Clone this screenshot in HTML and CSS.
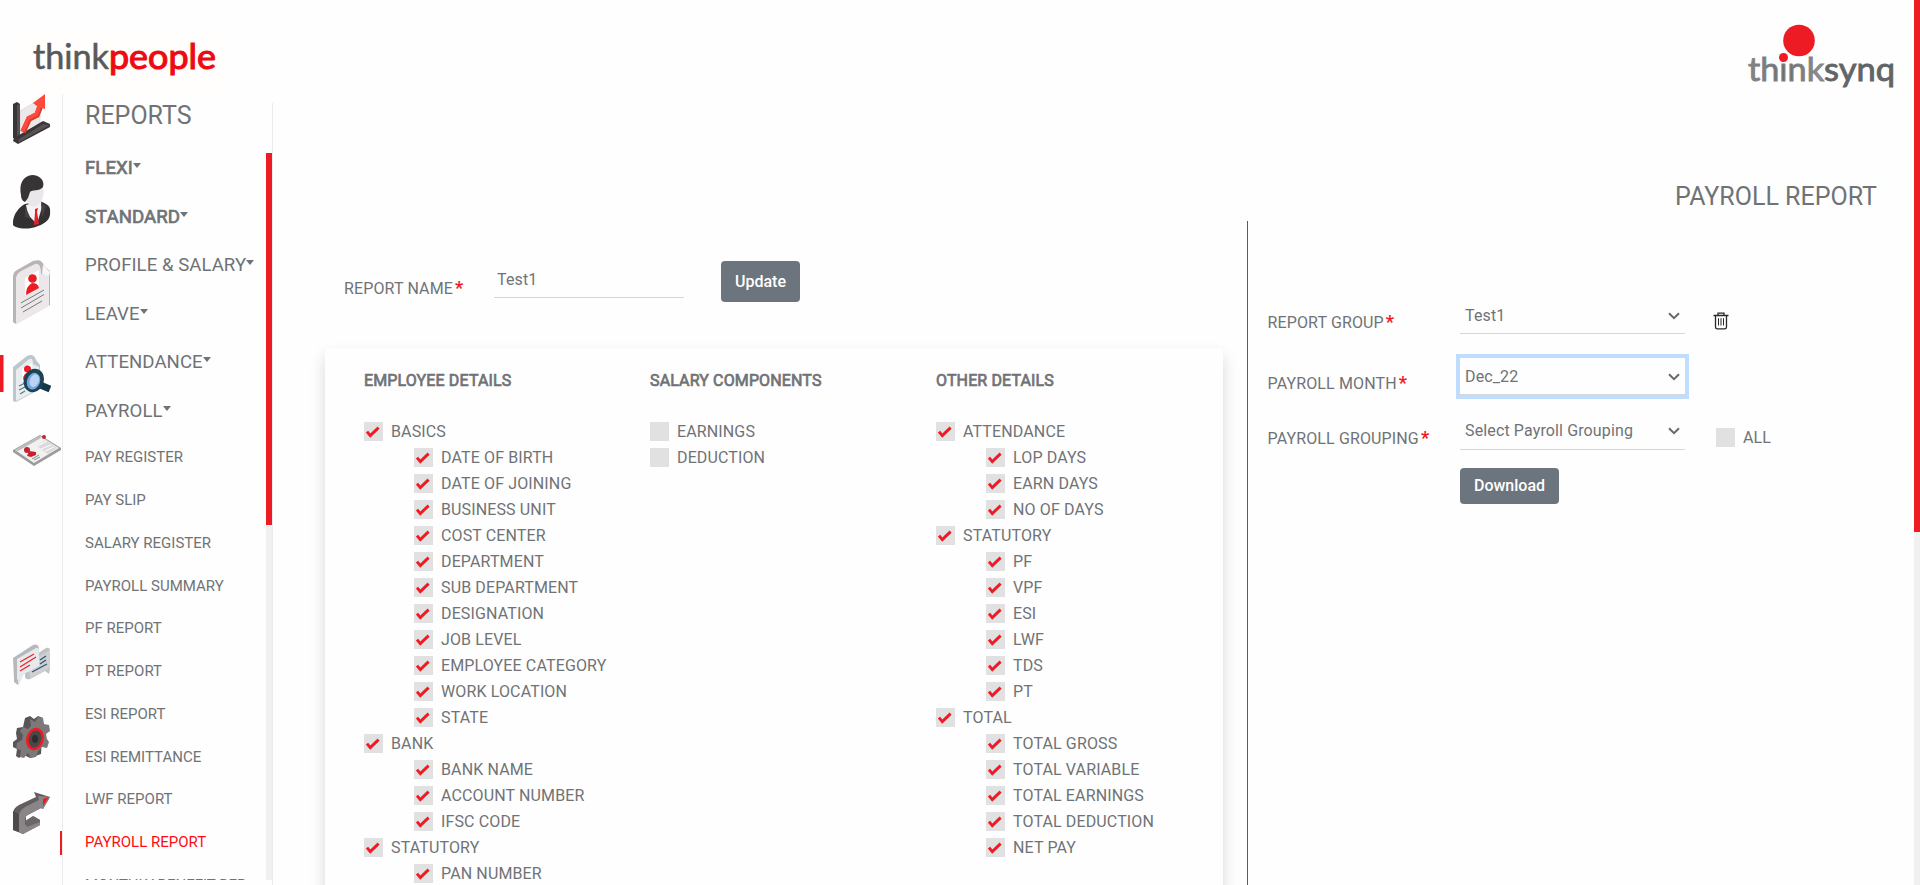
FILE: index.html
```html
<!DOCTYPE html>
<html lang="en">
<head>
<meta charset="utf-8">
<title>Payroll Report</title>
<link rel="stylesheet" href="styles.css">
</head>
<body>
<svg class="defs" width="0" height="0" aria-hidden="true">
  <symbol id="tick" viewBox="0 0 19 19"><path d="M3 9.6 6.3 13.6 14.6 5.6" fill="none" stroke="#ee1b24" stroke-width="2.9"/></symbol>
  <symbol id="chev" viewBox="0 0 12 8"><path d="M1 1.300 6 6.200 11 1.300" fill="none" stroke="#66696c" stroke-width="2"/></symbol>
</svg>
<div class="app">
  <header class="top">
    <svg class="logo-people" width="210" height="64" viewBox="0 0 210 64">
      <rect width="210" height="64" fill="#fffefc"/>
      <text x="13" y="43.5" textLength="76" lengthAdjust="spacingAndGlyphs" class="lg lg-think">think</text>
      <text x="89" y="43.5" textLength="107" lengthAdjust="spacingAndGlyphs" class="lg lg-red">people</text>
    </svg>
    <svg class="logo-synq" width="150" height="70" viewBox="0 0 150 70">
      <defs><linearGradient id="g" x1="0" x2="1"><stop offset="0" stop-color="#85878a"/><stop offset=".5" stop-color="#6b6d70"/><stop offset="1" stop-color="#929497"/></linearGradient></defs>
      <text x="1" y="60.5" textLength="76" lengthAdjust="spacingAndGlyphs" class="lg lg-synq" fill="url(#g)">think</text>
      <text x="77" y="60.5" textLength="71" lengthAdjust="spacingAndGlyphs" class="lg lg-synq lg-dark">synq</text>
      <circle cx="52" cy="20.5" r="15.8" fill="#ed1c24"/>
      <circle cx="36.500" cy="37.5" r="4.5" fill="#ed1c24"/>
    </svg>
  </header>
  <div class="body">
    <nav class="rail">
      <svg class="ico i-chart" width="38" height="50" viewBox="0 0 38 50">
        <path d="M7 17 27 5V32L7 43z" fill="#ebe7ea" stroke="#d4d0d4" stroke-width=".6"/>
        <path d="M0 10 4 8 7 10V43L4 46 0 44z" fill="#3a3638"/><path d="M4 11 7 10V44L4 46z" fill="#555052"/>
        <path d="M1 44 30 27 37 30V33L5 50 0 47z" fill="#3a3638"/><path d="M5 46 30 30 37 31 6 48z" fill="#575254"/>
        <path d="M10 38 16 25 24 21 28 11" fill="none" stroke="#d93a2c" stroke-width="5.5"/>
        <path d="M9.5 37 15.500 24 23.500 20 27 10" fill="none" stroke="#ff4a3b" stroke-width="4"/>
        <path d="M20 9 32 0V15L29 14 25 13z" fill="#ff4a3b"/>
      </svg>
      <svg class="ico i-person" width="38" height="54" viewBox="0 0 38 54">
        <path d="M0 46C1 39 5 33 12 29L27 26C34 29 38 31 37 37 38 44 32 49 25 51 16 55 3 54 0 50z" fill="#333031"/>
        <path d="M13 30 28 26 29 32 24 49 15 40z" fill="#f4f2f3"/>
        <path d="M11 10 28 7C32 15 31 22 27 28 23 33 17 32 14 27 10 22 9 16 11 10z" fill="#e9e7e9"/>
        <path d="M8 20C6 10 9 1 19 0 27 0 32 6 30 12 26 17 19 14 17 17L15 23 12 27C9 26 8 23 8 20z" fill="#373435"/>
        <path d="M22 34 25 33 24 37 26 49 21 50 22 38z" fill="#ed1c24"/>
        <path d="M12 31 18 44 12 42zM28 28 29 43 33 31z" fill="#454142"/>
      </svg>
      <svg class="ico i-doc" width="38" height="64" viewBox="0 0 38 64">
        <path d="M0 17Q0 12 4 10L20 1Q29-2 31 6L37 11V45L3 64 0 62z" fill="#b8b4b6"/>
        <path d="M3 19Q3 14 8 11L22 4Q28 2 28 14L36 15V46L3 64z" fill="#ece7e9"/><path d="M30 5 37 12 36 16 29 14z" fill="#f8f6f7"/>
        <path d="M12 18 26 10V27L12 35z" fill="#fff"/><circle cx="19.500" cy="18.500" r="4.300" fill="#ed1c24"/><path d="M13 35Q13 26 19 23 25 23 26 28z" fill="#ed1c24"/>
        <path d="M8 43 31 30M8 48 31 34.500M10 52 29 41" stroke="#77797c" stroke-width="1"/>
      </svg>
      <div class="active-wrap"><svg class="ico i-search" width="38" height="48" viewBox="0 0 38 48">
        <path d="M0 12 14 1Q21-2 23 5L27 10V34L3 47 0 46z" fill="#bcc7cb"/><path d="M3 15 15 5Q20 1 20 9L26 12V34L3 46z" fill="#e9edef"/>
        <path d="M9 14 19 8V22L9 27z" fill="#fff"/><circle cx="14.500" cy="14" r="3.500" fill="#ed1c24"/><path d="M10 25Q10 18 16 17L18 22z" fill="#ed1c24"/>
        <path d="M6 31 14 27M6 35 14 31M7 39 12 36" stroke="#547783" stroke-width="1.100"/>
        <path d="M25 29 37 34" stroke="#143848" stroke-width="7"/><ellipse cx="21" cy="25.500" rx="10" ry="12" transform="rotate(20 21 25)" fill="#1c4352"/>
        <ellipse cx="20.500" cy="26" rx="6.500" ry="8.500" transform="rotate(20 20 26)" fill="#76a7e2"/><ellipse cx="21.500" cy="25.500" rx="4.500" ry="6.500" transform="rotate(20 21 25)" fill="#b9d3f7"/>
      </svg></div>
      <svg class="ico i-card" width="49" height="31" viewBox="0 0 49 31">
        <path d="M0 15 27 0 48 13V15L21 31 0 17z" fill="#9b9b9b"/><path d="M2 15 27 1 46 13 21 28z" fill="#f1f1f1"/><path d="M2 15 27 1 28 3 5 16z" fill="#bbb"/>
        <path d="M24 11 33 5 44 13 35 19z" fill="#dadada"/><path d="M25 11 34 6M28 14 38 10M32 16 41 12" stroke="#fff"/>
        <circle cx="14" cy="15" r="3" fill="#c8202c"/><path d="M14 21 16 16 23 17 23 20 18 22z" fill="#c8202c"/><circle cx="31" cy="2" r="2" fill="#c8202c"/><path d="M19 24 26 20M21 25 27 22" stroke="#888"/>
      </svg>
      <svg class="ico i-chat" width="38" height="41" viewBox="0 0 38 41">
        <path d="M12 18 33 4Q37 3 37 7V24L36 30 32 27 17 35Q12 36 12 32z" fill="#c0c1c3"/><path d="M15 19 37 6V24L17 34z" fill="#cfd0d2"/>
        <path d="M27 16 33 12M27 20 33 16M19 28 34 20" stroke="#2d5570" stroke-width="1.300"/>
        <path d="M0 14 20 1Q25-1 26 4V22L11 29 5 41 1 38V35z" fill="#b6b9bc"/><path d="M4 15 23 4Q26 3 26 7V22L11 30 5 40V36L4 35z" fill="#e6eaed"/>
        <path d="M7 18 21 10M7 23 23 13M7 27 17 21" stroke="#ed2631" stroke-width="1.400"/>
      </svg>
      <svg class="ico i-gear" width="38" height="43" viewBox="0 0 38 43">
        <path d="M12 2 17 0 21 3 25 0 30 2 28 38 17 42 13 40 11 38 6 42 3 40 4 33 0 31V26L4 23 3 17 4 12 10 11z" fill="#5a5657"/>
        <path d="M17 3 22 6 25 1 30 2 31 8 36 9 37 15 33 18 34 23 36 26 34 32 29 31 25 35 23 41 18 42 15 37 11 42 7 41 8 34 3 33 4 27 9 24 10 19 7 15 10 11 15 13 18 10z" fill="#7d797a"/>
        <ellipse cx="22" cy="23" rx="7.500" ry="10" transform="rotate(15 22 23)" fill="#4a4748" stroke="#ed1c24" stroke-width="2.600"/><ellipse cx="22" cy="23" rx="3" ry="4" fill="#2f2c2d"/>
      </svg>
      <svg class="ico i-exit" width="38" height="44" viewBox="0 0 38 44">
        <path d="M0 23Q0 17 6 14L23 6 21 1 37 6 30 18 28 17 13 25V33L19 30 20 25 27 29V34L10 43 0 39z" fill="#625e5f"/>
        <path d="M6 24Q7 19 12 16L26 9 25 5 37 6 30 18 28 17 16 23Q12 25 12 29V34L27 29V34L10 43 6 41z" fill="#8a8687"/><path d="M0 20 6 23V41L0 39z" fill="#4e4a4b"/>
        <path d="M12 30 20 25 27 29V31L14 36z" fill="#6b6768"/>
        <path d="M30 8 36 6 30 15z" fill="#ed1c24"/>
      </svg>
    </nav>
    <aside class="menu">
      <h2 class="menu-title">REPORTS</h2>
      <div class="menu-scroll">
        <ul class="menu-list">
          <li class="m faux">FLEXI<i class="caret"></i></li>
          <li class="m faux">STANDARD<i class="caret"></i></li>
          <li class="m">PROFILE &amp; SALARY<i class="caret"></i></li>
          <li class="m">LEAVE<i class="caret"></i></li>
          <li class="m">ATTENDANCE<i class="caret"></i></li>
          <li class="m">PAYROLL<i class="caret"></i></li>
          <li class="s">PAY REGISTER</li>
          <li class="s">PAY SLIP</li>
          <li class="s">SALARY REGISTER</li>
          <li class="s">PAYROLL SUMMARY</li>
          <li class="s">PF REPORT</li>
          <li class="s">PT REPORT</li>
          <li class="s">ESI REPORT</li>
          <li class="s">ESI REMITTANCE</li>
          <li class="s">LWF REPORT</li>
          <li class="s current">PAYROLL REPORT</li>
          <li class="s">MONTHLY BENEFIT REP</li>
        </ul>
        <div class="track"><div class="thumb"></div></div>
      </div>
    </aside>
    <main class="content">
      <h1 class="title">PAYROLL REPORT</h1>
      <div class="cols">
        <section class="left">
          <div class="name-row">
            <label class="lbl">REPORT NAME<b class="star">*</b></label>
            <div class="input">Test1</div>
            <button class="btn btn-update">Update</button>
          </div>
          <div class="card">
            <div class="col">
              <h3 class="faux">EMPLOYEE DETAILS</h3>
              <div class="r"><svg class="box"><use href="#tick"/></svg>BASICS</div>
              <div class="r sub"><svg class="box"><use href="#tick"/></svg>DATE OF BIRTH</div>
              <div class="r sub"><svg class="box"><use href="#tick"/></svg>DATE OF JOINING</div>
              <div class="r sub"><svg class="box"><use href="#tick"/></svg>BUSINESS UNIT</div>
              <div class="r sub"><svg class="box"><use href="#tick"/></svg>COST CENTER</div>
              <div class="r sub"><svg class="box"><use href="#tick"/></svg>DEPARTMENT</div>
              <div class="r sub"><svg class="box"><use href="#tick"/></svg>SUB DEPARTMENT</div>
              <div class="r sub"><svg class="box"><use href="#tick"/></svg>DESIGNATION</div>
              <div class="r sub"><svg class="box"><use href="#tick"/></svg>JOB LEVEL</div>
              <div class="r sub"><svg class="box"><use href="#tick"/></svg>EMPLOYEE CATEGORY</div>
              <div class="r sub"><svg class="box"><use href="#tick"/></svg>WORK LOCATION</div>
              <div class="r sub"><svg class="box"><use href="#tick"/></svg>STATE</div>
              <div class="r"><svg class="box"><use href="#tick"/></svg>BANK</div>
              <div class="r sub"><svg class="box"><use href="#tick"/></svg>BANK NAME</div>
              <div class="r sub"><svg class="box"><use href="#tick"/></svg>ACCOUNT NUMBER</div>
              <div class="r sub"><svg class="box"><use href="#tick"/></svg>IFSC CODE</div>
              <div class="r"><svg class="box"><use href="#tick"/></svg>STATUTORY</div>
              <div class="r sub"><svg class="box"><use href="#tick"/></svg>PAN NUMBER</div>
            </div>
            <div class="col">
              <h3 class="faux">SALARY COMPONENTS</h3>
              <div class="r"><svg class="box"></svg>EARNINGS</div>
              <div class="r"><svg class="box"></svg>DEDUCTION</div>
            </div>
            <div class="col">
              <h3 class="faux">OTHER DETAILS</h3>
              <div class="r"><svg class="box"><use href="#tick"/></svg>ATTENDANCE</div>
              <div class="r sub"><svg class="box"><use href="#tick"/></svg>LOP DAYS</div>
              <div class="r sub"><svg class="box"><use href="#tick"/></svg>EARN DAYS</div>
              <div class="r sub"><svg class="box"><use href="#tick"/></svg>NO OF DAYS</div>
              <div class="r"><svg class="box"><use href="#tick"/></svg>STATUTORY</div>
              <div class="r sub"><svg class="box"><use href="#tick"/></svg>PF</div>
              <div class="r sub"><svg class="box"><use href="#tick"/></svg>VPF</div>
              <div class="r sub"><svg class="box"><use href="#tick"/></svg>ESI</div>
              <div class="r sub"><svg class="box"><use href="#tick"/></svg>LWF</div>
              <div class="r sub"><svg class="box"><use href="#tick"/></svg>TDS</div>
              <div class="r sub"><svg class="box"><use href="#tick"/></svg>PT</div>
              <div class="r"><svg class="box"><use href="#tick"/></svg>TOTAL</div>
              <div class="r sub"><svg class="box"><use href="#tick"/></svg>TOTAL GROSS</div>
              <div class="r sub"><svg class="box"><use href="#tick"/></svg>TOTAL VARIABLE</div>
              <div class="r sub"><svg class="box"><use href="#tick"/></svg>TOTAL EARNINGS</div>
              <div class="r sub"><svg class="box"><use href="#tick"/></svg>TOTAL DEDUCTION</div>
              <div class="r sub"><svg class="box"><use href="#tick"/></svg>NET PAY</div>
            </div>
          </div>
        </section>
        <section class="right">
          <div class="f f1">
            <label class="lbl">REPORT GROUP<b class="star">*</b></label>
            <div class="select">Test1<svg width="12" height="8"><use href="#chev"/></svg></div>
            <svg class="trash" width="16" height="18" viewBox="0 0 16 18" fill="none" stroke="#26282c"><path d="M.5 3.500H15.500M5 3V1.200H11V3M2.500 3.500V15Q2.500 16.800 4 16.800H12Q13.500 16.800 13.500 15V3.500" stroke-width="1.300"/><path d="M5.500 6.200V13.500M8 6.200V13.500M10.500 6.200V13.500" stroke-width="1"/></svg>
          </div>
          <div class="f f2">
            <label class="lbl">PAYROLL MONTH<b class="star">*</b></label>
            <div class="select focus">Dec_22<svg width="12" height="8"><use href="#chev"/></svg></div>
          </div>
          <div class="f">
            <label class="lbl">PAYROLL GROUPING<b class="star">*</b></label>
            <div class="select grouping">Select Payroll Grouping<svg width="12" height="8"><use href="#chev"/></svg></div>
            <div class="all"><svg class="box"></svg>ALL</div>
          </div>
          <button class="btn btn-dl">Download</button>
        </section>
      </div>
    </main>
  </div>
</div>
<div class="page-scroll"><div class="page-thumb"></div></div>
</body>
</html>
```
FILE: styles.css
```css
* { box-sizing: border-box; }
body {
  margin: 0;
  height: 885px;
  overflow: hidden;
  display: flex;
  background: #fefefe;
  color: #707376;
  font: 16px/24px Roboto, "Liberation Sans", sans-serif;
  letter-spacing: .13px;
}
.defs { position: absolute; }
.app { flex: 1; min-width: 0; display: flex; flex-direction: column; }
.page-scroll { width: 6px; background: #f0f0f0; }
.page-thumb { height: 532px; background: #ee1b24; }
h1, h2, h3, ul { margin: 0; padding: 0; font-weight: 400; list-style: none; }
.faux { -webkit-text-stroke: .7px currentColor; }

.top { height: 94px; display: flex; justify-content: space-between; padding: 0 17px 0 20px; }
.logo-people { margin-top: 25px; }
.logo-synq { margin-top: 20px; overflow: visible; }
.lg { font-family: Lato, sans-serif; font-size: 34px; letter-spacing: 0; }
.lg-think { fill: #58595b; stroke: #58595b; stroke-width: .6px; }
.lg-red { fill: #ee0a12; stroke: #ee0a12; stroke-width: 1.1px; }
.lg-synq { stroke: #808285; stroke-width: .9px; font-size: 33px; }
.lg-dark { fill: #616568; stroke: #616568; }

.body { flex: 1; min-height: 0; display: flex; }
.rail { width: 63px; border-right: 1px solid #ececec; padding-left: 13px; overflow: hidden; }
.ico { display: block; }
.i-person { margin-top: 31px; }
.i-doc { margin-top: 31px; }
.active-wrap { margin: 31px 0 0 -13px; padding-left: 13px; background: linear-gradient(#ee1b24, #ee1b24) 0 0 / 3.500px 37px no-repeat; }
.i-card { margin-top: 32px; }
.i-chat { margin-top: 178px; }
.i-gear { margin-top: 31px; }
.i-exit { margin-top: 32px; }

.menu { width: 210px; margin-top: 9px; border-right: 1px solid #ececec; }
.menu-title { height: 50px; padding: 1px 0 0 22px; font-size: 25px; line-height: 24px; letter-spacing: 0; }
.menu-scroll { height: 727px; margin-left: -3px; display: flex; justify-content: space-between; overflow: hidden; }
.menu-list { padding: 1px 0 0 25px; white-space: nowrap; letter-spacing: .05px; }
.m { height: 29px; margin-bottom: 19.600px; font-size: 18.600px; line-height: 29px; }
.caret { display: inline-block; margin-left: 0; vertical-align: 6px; border: 4.500px solid transparent; border-top: 5px solid #707376; border-bottom: 0; }
.s { height: 20px; margin-top: 22.750px; font-size: 15px; line-height: 20px; position: relative; top: -1.300px; letter-spacing: 0; }
.current { color: #ff0d12; }
.current::before { content: ""; position: absolute; left: -25px; top: -1px; width: 2px; height: 24px; background: #ee1b24; }
.track { width: 6px; background: #f0f0f0; }
.thumb { height: 372px; background: #ee1b24; }

.content { flex: 1; display: flex; flex-direction: column; min-width: 0; }
.title { height: 127px; padding: 87px 37px 0 0; text-align: right; font-size: 25px; line-height: 32px; letter-spacing: 0; }
.cols { flex: 1; min-height: 0; display: flex; }
.left { width: 974px; padding: 40px 0 0 52px; overflow: hidden; }
.name-row { display: flex; margin-bottom: 46px; padding-left: 19px; height: 41px; }
.lbl { width: 150px; padding-top: 16px; white-space: nowrap; }
.star { color: #ee1b24; font-size: 18px; line-height: 20px; margin-left: 2px; }
.input { width: 190px; height: 37px; padding: 7px 3px 5px; border-bottom: 1px solid #d6d7d9; }
.btn { border: 0; border-radius: 4px; background: #6c757d; color: #fff; font: 500 16px/24px Roboto, sans-serif; padding: 0; letter-spacing: 0; }
.btn-update { margin-left: 37px; width: 79px; height: 41px; }
.card { width: 898px; height: 900px; padding: 21px 39px; display: flex; border-radius: 4px; background: #fefefe; box-shadow: 0 8px 16px rgba(0, 0, 0, .15); }
.col { width: 286px; flex: none; }
.col h3 { font-size: 16px; height: 50px; line-height: 24px; }
.r { display: flex; align-items: center; height: 26px; line-height: 26px; white-space: nowrap; }
.sub { padding-left: 50px; }
.box { width: 19px; height: 19px; margin: 0 8px 1px 0; background: #e1e1e1; }

.right { flex: 1; border-left: 1px solid #ee1b24; padding: 76px 0 0 19.500px; }
.f { display: flex; height: 37px; }
.f1 { margin-bottom: 24px; }
.f2 { margin-bottom: 18px; }
.f .lbl { width: 192.500px; padding-top: 14px; }
.select { width: 225px; height: 37px; padding: 7px 5px 5px; border-bottom: 1px solid #d6d7d9; display: flex; justify-content: space-between; align-items: center; }
.grouping { padding: 6px 5px; }
.focus { box-shadow: 0 0 0 4px #bfdeff; }
.trash { margin: 15px 0 0 28px; }
.all { display: flex; align-items: center; padding: 13px 0 0 31px; height: 37px; }
.btn-dl { display: block; margin: 18px 0 0 192.500px; width: 99px; height: 36px; }
```
